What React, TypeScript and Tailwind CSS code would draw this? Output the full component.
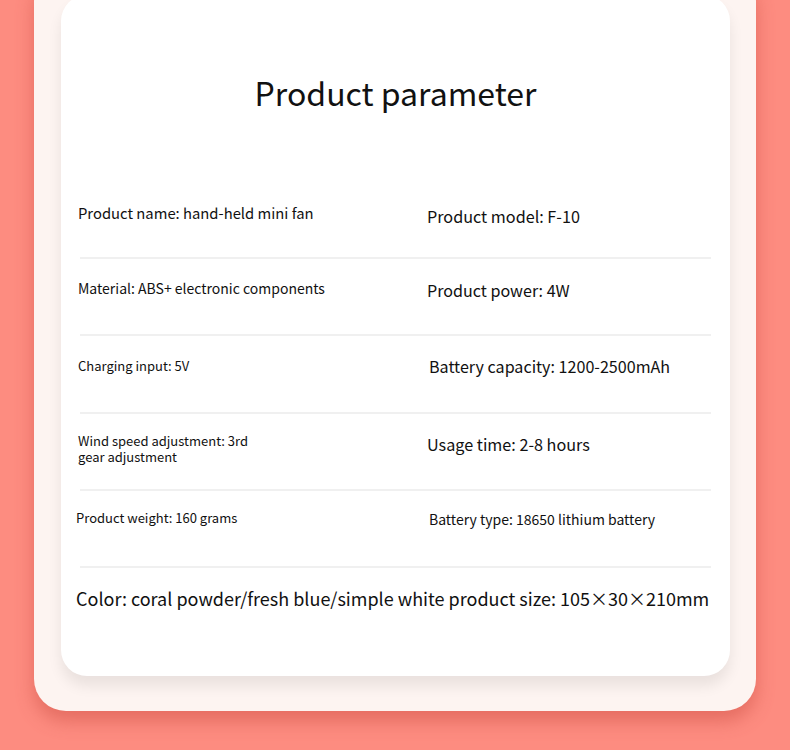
import React from "react";

const font = { fontFamily: '"Noto Sans CJK SC", "Noto Sans", sans-serif' };

export default function App() {
  return (
    <div className="w-[790px] h-[750px] overflow-hidden bg-[#fd8c80]" style={font}>
      <div className="mx-[34px] -mt-[30px] rounded-[32px] bg-[#fdf4f1] pl-[27px] pr-[26px] pt-[25px] pb-[35px] shadow-[0_10px_18px_rgba(200,70,60,0.45)]">
        <div className="rounded-[26px] bg-white px-[19px] pt-[75px] pb-[65px] text-[#111] shadow-[0_10px_14px_rgba(0,0,0,0.08)]">
          <h1 className="text-center text-[32px] leading-[44px] font-normal">Product parameter</h1>
          <div className="mt-[68px]">
            <div className="grid grid-cols-[347px_1fr] h-[77px] border-b-2 border-[#f0f0f0]">
              <div className="-ml-[2px] pt-[21px] text-[14.8px] leading-[20px]">Product name: hand-held mini fan</div>
              <div className="pt-[23px] text-[16.2px] leading-[22px]">Product model: F-10</div>
            </div>
            <div className="grid grid-cols-[347px_1fr] h-[77px] border-b-2 border-[#f0f0f0]">
              <div className="-ml-[2px] pt-[19px] text-[14px] leading-[20px]">Material: ABS+ electronic components</div>
              <div className="pt-[20px] text-[16.1px] leading-[22px]">Product power: 4W</div>
            </div>
            <div className="grid grid-cols-[347px_1fr] h-[78px] border-b-2 border-[#f0f0f0]">
              <div className="-ml-[2px] pt-[21px] text-[13px] leading-[18px]">Charging input: 5V</div>
              <div className="pl-[2px] pt-[19px] text-[16.1px] leading-[22px]">Battery capacity: 1200-2500mAh</div>
            </div>
            <div className="grid grid-cols-[347px_1fr] h-[77px] border-b-2 border-[#f0f0f0]">
              <div className="-ml-[2px] pt-[19px] text-[13px] leading-[16px]">
                <div>Wind speed adjustment: 3rd</div>
                <div>gear adjustment</div>
              </div>
              <div className="pt-[19px] text-[16.2px] leading-[22px]">Usage time: 2-8 hours</div>
            </div>
            <div className="grid grid-cols-[347px_1fr] h-[77px] border-b-2 border-[#f0f0f0]">
              <div className="-ml-[4px] pt-[18px] text-[13px] leading-[18px]">Product weight: 160 grams</div>
              <div className="pl-[2px] pt-[18px] text-[14px] leading-[20px]">Battery type: 18650 lithium battery</div>
            </div>
            <div className="-ml-[4px] pt-[17px] text-[18px] leading-[26px] whitespace-nowrap">Color: coral powder/fresh blue/simple white product size: 105×30×210mm</div>
          </div>
        </div>
      </div>
    </div>
  );
}
